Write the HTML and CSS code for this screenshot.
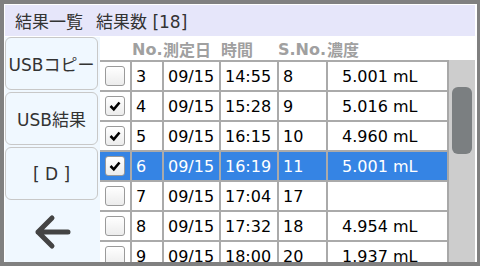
FILE: index.html
```html
<!DOCTYPE html>
<html lang="ja">
<head>
    <meta charset="UTF-8">
    <title>結果一覧</title>
    <link rel="stylesheet" href="styles.css">
</head>
<body>
    <div class="window">
        <div class="title">
            <span class="title-main">結果一覧</span>
            <span>結果数 [18]</span>
        </div>
        <div class="main">
            <!-- 左メニュー -->
            <div class="side">
                <button class="side-btn">USBコピー</button>
                <button class="side-btn">USB結果</button>
                <button class="side-btn">[ D ]</button>
                <div class="back">
                    <svg width="40" height="36" viewBox="0 0 40 36">
                        <path d="M5 18 H35 M19 4 L5 18 L19 32" fill="none" stroke="#444" stroke-width="5" stroke-linecap="round" stroke-linejoin="round"/>
                    </svg>
                </div>
            </div>
            <!-- 結果リスト -->
            <div class="list">
                <div class="list-head">
                    <div></div>
                    <div>No.</div>
                    <div>測定日</div>
                    <div>時間</div>
                    <div>S.No.</div>
                    <div>濃度</div>
                </div>
                <div class="list-body">
                    <div class="rows">
                        <div class="row">
                            <div class="cell"><span class="check"></span></div>
                            <div class="cell">3</div>
                            <div class="cell">09/15</div>
                            <div class="cell">14:55</div>
                            <div class="cell">8</div>
                            <div class="cell conc">5.001 mL</div>
                        </div>
                        <div class="row">
                            <div class="cell"><span class="check on"><svg width="18" height="18" viewBox="0 0 18 18"><path d="M4.5 9 L7.8 12.3 L13.5 5.5" fill="none" stroke="#000" stroke-width="2.6"/></svg></span></div>
                            <div class="cell">4</div>
                            <div class="cell">09/15</div>
                            <div class="cell">15:28</div>
                            <div class="cell">9</div>
                            <div class="cell conc">5.016 mL</div>
                        </div>
                        <div class="row">
                            <div class="cell"><span class="check on"><svg width="18" height="18" viewBox="0 0 18 18"><path d="M4.5 9 L7.8 12.3 L13.5 5.5" fill="none" stroke="#000" stroke-width="2.6"/></svg></span></div>
                            <div class="cell">5</div>
                            <div class="cell">09/15</div>
                            <div class="cell">16:15</div>
                            <div class="cell">10</div>
                            <div class="cell conc">4.960 mL</div>
                        </div>
                        <div class="row selected">
                            <div class="cell"><span class="check on"><svg width="18" height="18" viewBox="0 0 18 18"><path d="M4.5 9 L7.8 12.3 L13.5 5.5" fill="none" stroke="#000" stroke-width="2.6"/></svg></span></div>
                            <div class="cell">6</div>
                            <div class="cell">09/15</div>
                            <div class="cell">16:19</div>
                            <div class="cell">11</div>
                            <div class="cell conc">5.001 mL</div>
                        </div>
                        <div class="row">
                            <div class="cell"><span class="check"></span></div>
                            <div class="cell">7</div>
                            <div class="cell">09/15</div>
                            <div class="cell">17:04</div>
                            <div class="cell">17</div>
                            <div class="cell conc"></div>
                        </div>
                        <div class="row">
                            <div class="cell"><span class="check"></span></div>
                            <div class="cell">8</div>
                            <div class="cell">09/15</div>
                            <div class="cell">17:32</div>
                            <div class="cell">18</div>
                            <div class="cell conc">4.954 mL</div>
                        </div>
                        <div class="row">
                            <div class="cell"><span class="check"></span></div>
                            <div class="cell">9</div>
                            <div class="cell">09/15</div>
                            <div class="cell">18:00</div>
                            <div class="cell">20</div>
                            <div class="cell conc">1.937 mL</div>
                        </div>
                    </div>
                    <div class="scrollbar">
                        <div class="thumb"></div>
                    </div>
                </div>
            </div>
        </div>
    </div>
</body>
</html>
```

FILE: styles.css
```css
/* 基本 */
* {
    margin: 0;
    padding: 0;
    box-sizing: border-box;
}

body {
    font-family: 'DejaVu Sans', 'Noto Sans CJK JP', sans-serif;
    background: #fff;
    color: #000;
}

.window {
    width: 480px;
    height: 266px;
    border: 4px solid #808080;
    border-right-width: 3px;
    padding: 1px 2px 0 1px;
    display: flex;
    flex-direction: column;
    overflow: hidden;
}

/* タイトル */
.title {
    height: 31px;
    margin-bottom: 1px;
    background: #e6e6fa;
    color: #333;
    font-size: 17px;
    display: flex;
    align-items: center;
    padding-left: 10px;
}

.title-main {
    margin-right: 13px;
}

.main {
    flex: 1;
    display: flex;
    min-height: 0;
}

/* 左メニュー */
.side {
    width: 95px;
    background: #f0f8ff;
    display: flex;
    flex-direction: column;
    gap: 2px;
}

.side-btn {
    width: 93px;
    height: 53px;
    border: 1px solid #c8c8c8;
    border-radius: 6px;
    background: #f0f8ff;
    color: #333;
    font-family: 'DejaVu Sans', 'Noto Sans CJK JP', sans-serif;
    font-size: 17px;
    white-space: nowrap;
}

.back {
    flex: 1;
    display: flex;
    align-items: center;
    justify-content: center;
}

/* リスト */
.list {
    flex: 1;
    display: flex;
    flex-direction: column;
    min-width: 0;
}

.list-head,
.row {
    display: grid;
    grid-template-columns: 30px 32px 57px 58px 49px 121px;
}

.list-head {
    height: 23px;
    align-items: center;
    color: #a0a0a0;
    font-size: 16px;
    font-weight: bold;
}

.list-head div {
    padding-left: 2px;
    white-space: nowrap;
}

.list-head div:nth-child(3),
.list-head div:nth-child(5),
.list-head div:nth-child(6) {
    padding-left: 1px;
}

.list-body {
    flex: 1;
    display: flex;
    min-height: 0;
    overflow: hidden;
}

.rows {
    width: 347px;
}

.row {
    height: 30px;
    border-top: 2px solid #aaa;
    background: #fff;
    font-size: 16px;
}

.row.selected {
    background: #3584e4;
    color: #fff;
}

.cell {
    border-left: 2px solid #aaa;
    padding-left: 4px;
    display: flex;
    align-items: center;
    white-space: nowrap;
}

.cell:first-child {
    border-left: none;
    padding-left: 0;
    justify-content: center;
}

.cell.conc {
    padding-left: 14px;
}

.check {
    width: 20px;
    height: 20px;
    border: 1px solid #9a9a9a;
    border-radius: 3px;
    background: linear-gradient(#fff, #ececec);
    display: flex;
    align-items: center;
    justify-content: center;
}

/* スクロールバー */
.scrollbar {
    width: 28px;
    border-left: 2px solid #a8a8a8;
    background: #cdcdcd;
    padding: 27px 3px 0 3px;
}

.thumb {
    width: 20px;
    height: 67px;
    border-radius: 6px;
    background: #7b7f81;
}
```
